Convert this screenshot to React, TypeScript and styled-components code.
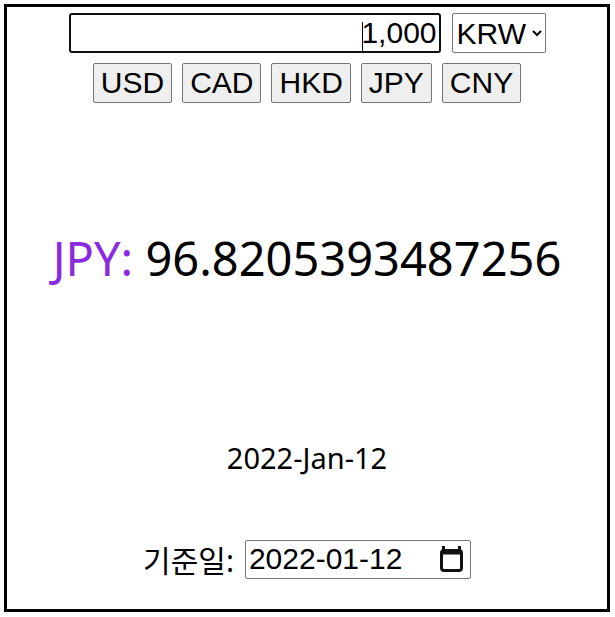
import React, { useState } from "react";
import styled, { createGlobalStyle } from "styled-components";

const currencies = ["USD", "CAD", "HKD", "JPY", "CNY"];

const CalendarIcon: React.FC = () => (
  <svg width="24" height="26" viewBox="0 0 24 26" aria-hidden="true">
    <rect x="2" y="0" width="3" height="5" fill="#111" />
    <rect x="18" y="0" width="3" height="5" fill="#111" />
    <rect
      x="1.5"
      y="4.5"
      width="20"
      height="20"
      rx="2.5"
      fill="none"
      stroke="#111"
      strokeWidth="3"
    />
    <rect x="1.5" y="4.5" width="20" height="4" fill="#111" />
  </svg>
);

const App: React.FC = () => {
  const [amount, setAmount] = useState("1,000");
  const [base, setBase] = useState("KRW");
  const [target, setTarget] = useState("JPY");
  const [date, setDate] = useState("2022-01-12");

  return (
    <>
      <GlobalStyle />
      <Frame>
        <InputRow>
          <AmountWrap>
            <AmountInput
              value={amount}
              onChange={(e) => setAmount(e.target.value)}
            />
            <Caret />
          </AmountWrap>
          <BaseSelect value={base} onChange={(e) => setBase(e.target.value)}>
            <option>KRW</option>
            <option>USD</option>
          </BaseSelect>
        </InputRow>
        <ButtonRow>
          {currencies.map((c) => (
            <CurrencyButton key={c} onClick={() => setTarget(c)}>
              {c}
            </CurrencyButton>
          ))}
        </ButtonRow>
        <Rate>
          <RateLabel>{target}:</RateLabel> 96.8205393487256
        </Rate>
        <DateText>2022-Jan-12</DateText>
        <DateRow>
          기준일:
          <DateField>
            <DateValue value={date} onChange={(e) => setDate(e.target.value)} />
            <CalendarIcon />
          </DateField>
        </DateRow>
      </Frame>
    </>
  );
};

export default App;

const GlobalStyle = createGlobalStyle`
  body {
    margin: 0;
    background: #fff;
    font-family: "Noto Sans", "Noto Sans CJK KR", sans-serif;
  }
`;

const Frame = styled.div`
  margin: 4px;
  width: 600px;
  height: 596px;
  border: 3px solid #000;
  display: flex;
  flex-direction: column;
  align-items: center;
  padding-top: 6px;
  box-sizing: content-box;
`;

const InputRow = styled.div`
  display: flex;
  align-items: center;
  gap: 11px;
`;

const AmountWrap = styled.div`
  position: relative;
`;

const AmountInput = styled.input`
  display: block;
  width: 372px;
  height: 40px;
  box-sizing: border-box;
  border: 2px solid #111;
  border-radius: 3px;
  padding: 0 2px;
  text-align: right;
  font-family: "Liberation Sans", Arial, sans-serif;
  font-size: 30px;
  color: #000;
  outline: none;
`;

const Caret = styled.span`
  position: absolute;
  top: 9px;
  right: 78px;
  width: 1px;
  height: 30px;
  background: #000;
`;

const BaseSelect = styled.select`
  width: 94px;
  height: 40px;
  box-sizing: border-box;
  font-family: "Liberation Sans", Arial, sans-serif;
  font-size: 30px;
  border: 1px solid #767676;
  border-radius: 2px;
  background: #fff;
  color: #000;
`;

const ButtonRow = styled.div`
  display: flex;
  gap: 10px;
  margin-top: 10px;
`;

const CurrencyButton = styled.button`
  height: 40px;
  padding: 1px 7px;
  font-family: "Liberation Sans", Arial, sans-serif;
  font-size: 30px;
  color: #000;
  background: #efefef;
  border: 1px solid #767676;
  border-radius: 2px;
`;

const Rate = styled.div`
  margin-top: 123px;
  font-size: 47px;
  line-height: 65px;
  color: #000;
`;

const RateLabel = styled.span`
  color: blueviolet;
`;

const DateText = styled.div`
  margin-top: 146px;
  font-size: 29px;
  line-height: 41px;
`;

const DateRow = styled.div`
  margin-top: 59px;
  display: flex;
  align-items: center;
  gap: 11px;
  font-size: 30px;
`;

const DateField = styled.label`
  display: flex;
  align-items: center;
  width: 226px;
  height: 39px;
  box-sizing: border-box;
  border: 1px solid #767676;
  border-radius: 2px;
  padding: 0 6px 0 3px;
  background: #fff;
`;

const DateValue = styled.input`
  flex: 1;
  min-width: 0;
  border: none;
  outline: none;
  padding: 0;
  font-family: "Liberation Sans", Arial, sans-serif;
  font-size: 30px;
  color: #000;
  background: transparent;
`;
